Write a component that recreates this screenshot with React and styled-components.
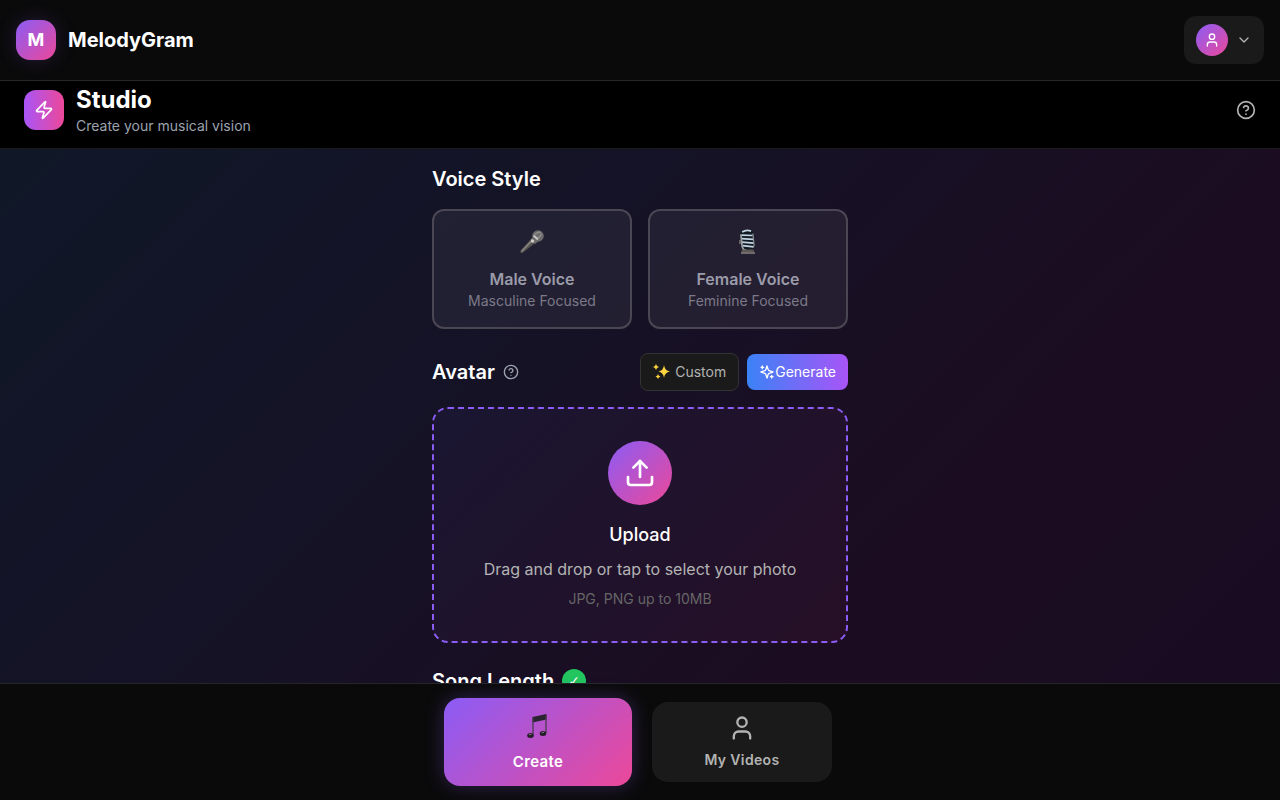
import React from "react";
import styled, { createGlobalStyle, css } from "styled-components";
import { Zap, User, ChevronDown, CircleHelp, Upload } from "lucide-react";

const GlobalStyle = createGlobalStyle`
  * { box-sizing: border-box; }
  html, body, #root { height: 100%; }
  body {
    margin: 0;
    overflow: hidden;
    background: #000;
    color: #fff;
    font-family: Inter, "Liberation Sans", sans-serif;
    font-size: 16px;
    line-height: 24px;
  }
  button { font: inherit; color: inherit; border: 0; background: none; padding: 0; cursor: pointer; }
  h1, h2, h3, p { margin: 0; }
`;

const Page = styled.div`
  display: flex;
  flex-direction: column;
  height: 100vh;
`;

const TopBar = styled.header`
  display: flex;
  flex: none;
  align-items: center;
  justify-content: space-between;
  padding: 16px;
  background: #0a0a0a;
  border-bottom: 1px solid #262626;
`;

const Brand = styled.a`
  display: flex;
  align-items: center;
  gap: 12px;
  color: #fff;
  font-size: 20px;
  font-weight: 700;
  line-height: 28px;
  text-decoration: none;
`;

const BrandMark = styled.span`
  display: grid;
  place-items: center;
  width: 40px;
  height: 40px;
  border-radius: 14px;
  background: linear-gradient(135deg, #8b5cf6, #ec4899);
  box-shadow: 0 0 20px rgba(139, 92, 246, 0.2);
  font-size: 18px;
`;

const AccountButton = styled.button`
  display: flex;
  align-items: center;
  gap: 8px;
  padding: 8px 12px;
  border-radius: 12px;
  background: #1a1a1a;
  color: #b3b3b3;
`;

const AccountAvatar = styled.span`
  display: grid;
  place-items: center;
  width: 32px;
  height: 32px;
  border-radius: 50%;
  background: linear-gradient(135deg, #8b5cf6, #ec4899);
  color: #fff;
`;

const StudioBar = styled.section`
  display: flex;
  flex: none;
  align-items: center;
  justify-content: space-between;
  padding: 3px 24px 12px;
  background: #000;
  border-bottom: 1px solid #1a1a1a;
`;

const StudioHeading = styled.div`
  display: flex;
  align-items: center;
  gap: 12px;
`;

const StudioIcon = styled.span`
  display: grid;
  place-items: center;
  width: 40px;
  height: 40px;
  border-radius: 12px;
  background: linear-gradient(90deg, #a855f7, #ec4899);
`;

const StudioTitle = styled.h1`
  font-size: 24px;
  font-weight: 700;
  line-height: 32px;
`;

const StudioSubtitle = styled.p`
  color: #9ca3af;
  font-size: 14px;
  line-height: 20px;
`;

const HelpButton = styled.button`
  display: grid;
  place-items: center;
  color: ${(p) => p.$color};
`;

const Main = styled.main`
  flex: 1;
  min-height: 0;
  overflow: hidden;
  padding: 16px 16px 0;
  background: linear-gradient(135deg, #101828, #151226 40%, #1c0c21 74%, #180c22);
`;

const Column = styled.div`
  display: flex;
  flex-direction: column;
  gap: 24px;
  max-width: 416px;
  margin: 0 auto;
`;

const Section = styled.section`
  display: flex;
  flex-direction: column;
  gap: 16px;
`;

const SectionHead = styled.div`
  display: flex;
  align-items: center;
  justify-content: space-between;
`;

const TitleGroup = styled.div`
  display: flex;
  align-items: center;
  gap: 8px;
`;

const SectionTitle = styled.h2`
  font-size: 20px;
  font-weight: 600;
  line-height: 28px;
`;

const VoiceGrid = styled.div`
  display: grid;
  grid-template-columns: 1fr 1fr;
  gap: 16px;
`;

const VoiceCard = styled.button`
  display: flex;
  flex-direction: column;
  align-items: center;
  padding: 14px 16px 16px;
  border: 2px solid #4b4653;
  border-radius: 12px;
  background: rgba(255, 255, 255, 0.06);
`;

const VoiceGlyph = styled.span`
  display: grid;
  place-items: center;
  height: 34px;
  margin-bottom: 8px;
`;

const VoiceName = styled.span`
  color: #9b9ba9;
  font-weight: 600;
`;

const VoiceNote = styled.span`
  color: #7c7a88;
  font-size: 14px;
  line-height: 20px;
`;

const ButtonGroup = styled.div`
  display: flex;
  align-items: center;
  gap: 8px;
`;

const SmallButton = styled.button`
  display: flex;
  align-items: center;
  border-radius: 8px;
  padding: 8px 12px;
  font-size: 14px;
  line-height: 20px;
  ${(p) =>
    p.$primary
      ? css`
          background: linear-gradient(90deg, #3b82f6, #a855f7);
        `
      : css`
          gap: 4px;
          border: 1px solid #333;
          background: #1a1a1a;
          color: #b3b3b3;
        `}
`;

const DropZone = styled.button`
  display: flex;
  flex-direction: column;
  align-items: center;
  padding: 32px;
  border: 2px dashed #8b5cf6;
  border-radius: 16px;
  background: linear-gradient(135deg, rgba(139, 92, 246, 0.05), rgba(236, 72, 153, 0.05));
`;

const UploadBadge = styled.span`
  display: grid;
  place-items: center;
  width: 64px;
  height: 64px;
  margin-bottom: 16px;
  border-radius: 50%;
  background: linear-gradient(135deg, #8b5cf6, #ec4899);
`;

const UploadTitle = styled.span`
  margin-bottom: 8px;
  font-size: 18px;
  font-weight: 500;
  line-height: 28px;
`;

const UploadText = styled.span`
  margin-bottom: 8px;
  color: #b3b3b3;
`;

const UploadHint = styled.span`
  color: #666;
  font-size: 14px;
  line-height: 20px;
`;

const DoneBadge = styled.span`
  display: grid;
  place-items: center;
  width: 24px;
  height: 24px;
  border-radius: 50%;
  background: #22c55e;
  font-family: "DejaVu Sans", sans-serif;
  font-size: 14px;
  line-height: 20px;
`;

const BottomNav = styled.nav`
  display: flex;
  flex: none;
  align-items: center;
  justify-content: center;
  gap: 24px;
  padding: 14px 16px;
  background: #0a0a0a;
  border-top: 1px solid #262626;
`;

const NavButton = styled.button`
  display: flex;
  flex-direction: column;
  align-items: center;
  justify-content: center;
  border-radius: 16px;
  font-size: 14px;
  font-weight: 600;
  line-height: 20px;
  letter-spacing: 0.025em;
  width: 180px;
  height: 80px;
  gap: 8px;
  background: #1a1a1a;
  color: #b3b3b3;
  ${(p) =>
    p.$active &&
    css`
      gap: 12px;
      width: 188px;
      height: 88px;
      margin: 0 -4px;
      background: linear-gradient(135deg, #8b5cf6, #ec4899);
      box-shadow: 0 0 20px rgba(139, 92, 246, 0.3);
      color: #fff;
      font-size: 15px;
    `}
`;

const Microphone = () => (
  <svg width="26" height="26" viewBox="0 0 26 26" aria-hidden="true">
    <path d="M2 21 L13 9 L17.500 13 L4 23.500 Q2.500 24.500 1.500 23.500 Q1 22.500 2 21Z" fill="#56544f" />
    <path d="M2.500 22.500 L14 10.500" stroke="#8b8986" strokeWidth="1.500" />
    <path d="M11.500 10.500 L16 15 L19 12.500 L14.500 8Z" fill="#716f70" />
    <circle cx="13.500" cy="12" r="1.700" fill="#d0cecb" />
    <circle cx="19" cy="7" r="5.800" fill="#6d6a6b" />
    <path d="M16 5.500 Q18 2.500 22 3.500 M18.500 9 Q21.500 8 22.500 5" stroke="#8f8c8c" strokeWidth="1.500" fill="none" />
    <path d="M14.500 6.500 L19 10.500" stroke="#c6c4c2" strokeWidth="2" />
  </svg>
);

const StudioMicrophone = () => (
  <svg width="26" height="26" viewBox="0 0 26 26" aria-hidden="true">
    <g transform="rotate(-6 13 11)">
      <rect x="5.500" y="0.500" width="13.500" height="21" rx="4.500" fill="#121a22" />
      <path d="M8 2.500 Q12.500 0 17 2.500 M7 5.500 L18 7 M6.500 9 L18.500 11 M6.500 12.500 L18.500 14.800 M7 16 L18 18.500" stroke="#c3d5e2" strokeWidth="1.700" fill="none" />
      <path d="M6.500 4.500 V17 Q7 20.500 10 21" stroke="#9ba1a6" strokeWidth="1.700" fill="none" />
      <path d="M18.500 5 V18" stroke="#8d9297" strokeWidth="1.200" fill="none" />
    </g>
    <path d="M5 11 V15" stroke="#77716d" strokeWidth="1.600" fill="none" />
    <path d="M7 20.500 H18.500 L19 23 H6.500Z" fill="#5d5855" />
    <path d="M6 24 H20" stroke="#8b8582" strokeWidth="1.500" />
  </svg>
);

const SparkleGlyph = () => (
  <svg width="18" height="18" viewBox="0 0 18 18" fill="#fcd53f" aria-hidden="true">
    <path d="M11 2 Q11.500 7.500 17 8.500 Q11.500 9.500 11 15 Q10.500 9.500 5.500 8.500 Q10.500 7.500 11 2Z" />
    <path d="M3 1 Q3.500 3.500 6 4 Q3.500 4.500 3 7 Q2.500 4.500 0 4 Q2.500 3.500 3 1Z" />
    <path d="M5 11 Q5.500 13 7.500 13.500 Q5.500 14 5 16 Q4.500 14 2.500 13.500 Q4.500 13 5 11Z" />
  </svg>
);

const Sparkles = () => (
  <svg
    width="16"
    height="16"
    viewBox="0 0 24 24"
    fill="none"
    stroke="currentColor"
    strokeWidth="2"
    strokeLinecap="round"
    strokeLinejoin="round"
    aria-hidden="true"
  >
    <path d="m12 3-1.912 5.813a2 2 0 0 1-1.275 1.275L3 12l5.813 1.912a2 2 0 0 1 1.275 1.275L12 21l1.912-5.813a2 2 0 0 1 1.275-1.275L21 12l-5.813-1.912a2 2 0 0 1-1.275-1.275L12 3Z" />
    <path d="M5 3v4M19 17v4M3 5h4M17 19h4" />
  </svg>
);

const MusicNotes = () => (
  <svg width="28" height="28" viewBox="0 0 28 28" aria-hidden="true">
    <path d="M8.500 5 L22.500 2 V7.500 L8.500 10.500Z" fill="#2b2430" />
    <path d="M9 6 V23 M22 4 V21" stroke="#4a3a50" strokeWidth="1.300" />
    <ellipse cx="6.500" cy="23.500" rx="3.300" ry="2.500" fill="#221d26" />
    <ellipse cx="19" cy="21.500" rx="3.300" ry="2.500" fill="#221d26" />
    <path d="M5 23 Q6 22 7.500 22.500 M17.500 21 Q18.500 20 20 20.500" stroke="#8d8093" strokeWidth="1" fill="none" />
  </svg>
);

export default function App() {
  return (
    <Page>
      <GlobalStyle />
      <TopBar>
        <Brand href="#">
          <BrandMark>M</BrandMark>
          MelodyGram
        </Brand>
        <AccountButton type="button" aria-label="Account menu">
          <AccountAvatar>
            <User size={16} />
          </AccountAvatar>
          <ChevronDown size={16} />
        </AccountButton>
      </TopBar>
      <StudioBar>
        <StudioHeading>
          <StudioIcon>
            <Zap size={20} />
          </StudioIcon>
          <div>
            <StudioTitle>Studio</StudioTitle>
            <StudioSubtitle>Create your musical vision</StudioSubtitle>
          </div>
        </StudioHeading>
        <HelpButton type="button" aria-label="Help" $color="#b3b3b3">
          <CircleHelp size={20} />
        </HelpButton>
      </StudioBar>
      <Main>
        <Column>
          <Section>
            <SectionTitle>Voice Style</SectionTitle>
            <VoiceGrid>
              <VoiceCard type="button">
                <VoiceGlyph>
                  <Microphone />
                </VoiceGlyph>
                <VoiceName>Male Voice</VoiceName>
                <VoiceNote>Masculine Focused</VoiceNote>
              </VoiceCard>
              <VoiceCard type="button">
                <VoiceGlyph>
                  <StudioMicrophone />
                </VoiceGlyph>
                <VoiceName>Female Voice</VoiceName>
                <VoiceNote>Feminine Focused</VoiceNote>
              </VoiceCard>
            </VoiceGrid>
          </Section>
          <Section>
            <SectionHead>
              <TitleGroup>
                <SectionTitle>Avatar</SectionTitle>
                <HelpButton type="button" aria-label="About avatars" $color="#9ca3af">
                  <CircleHelp size={16} />
                </HelpButton>
              </TitleGroup>
              <ButtonGroup>
                <SmallButton type="button">
                  <SparkleGlyph />
                  Custom
                </SmallButton>
                <SmallButton type="button" $primary>
                  <Sparkles />
                  Generate
                </SmallButton>
              </ButtonGroup>
            </SectionHead>
            <DropZone type="button">
              <UploadBadge>
                <Upload size={32} />
              </UploadBadge>
              <UploadTitle>Upload</UploadTitle>
              <UploadText>Drag and drop or tap to select your photo</UploadText>
              <UploadHint>JPG, PNG up to 10MB</UploadHint>
            </DropZone>
          </Section>
          <Section>
            <TitleGroup>
              <SectionTitle>Song Length</SectionTitle>
              <DoneBadge>✓</DoneBadge>
            </TitleGroup>
          </Section>
        </Column>
      </Main>
      <BottomNav>
        <NavButton type="button" $active>
          <MusicNotes />
          Create
        </NavButton>
        <NavButton type="button">
          <User size={28} />
          My Videos
        </NavButton>
      </BottomNav>
    </Page>
  );
}
